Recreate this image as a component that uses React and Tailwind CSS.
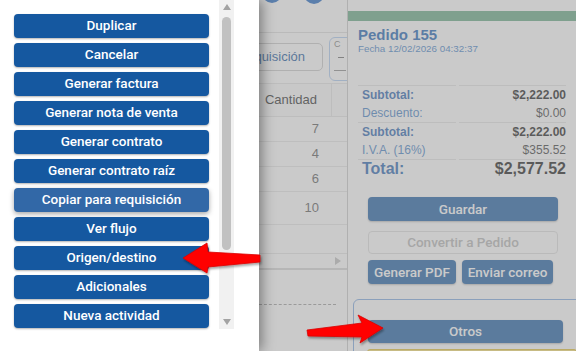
import React from 'react';

const MENU = [
  'Duplicar',
  'Cancelar',
  'Generar factura',
  'Generar nota de venta',
  'Generar contrato',
  'Generar contrato raíz',
  'Copiar para requisición',
  'Ver flujo',
  'Origen/destino',
  'Adicionales',
  'Nueva actividad',
];

const ROWS = [
  { qty: 7, h: 'h-[25px]' },
  { qty: 4, h: 'h-[25px]' },
  { qty: 6, h: 'h-[25px]' },
  { qty: 10, h: 'h-[33px]' },
];

const Drawer = () => {
  return (
    <div className="relative z-10 w-[259px] h-full shrink-0 bg-white flex shadow-[3px_0_12px_rgba(0,0,0,0.4)] font-['Roboto',sans-serif]">
      <div className="w-[219px] pl-[14px] pt-[14px] flex flex-col gap-[5px]">
        {MENU.map((label) => {
          const hover = label === 'Copiar para requisición';
          return (
            <button
              key={label}
              className={`w-[195px] h-[24px] shrink-0 rounded-[4px] flex items-center justify-center text-white text-[13.5px] font-medium leading-none ${
                hover
                  ? 'bg-[#3268a7] shadow-[0_2px_5px_rgba(0,0,0,0.35)]'
                  : 'bg-[#1558a0] shadow-[0_1px_2px_rgba(0,0,0,0.3)]'
              }`}
            >
              {label}
            </button>
          );
        })}
      </div>

      <div className="w-[15px] h-[329px] bg-[#f1f1f1] flex flex-col items-center">
        <div className="mt-[4px] w-0 h-0 border-x-[4px] border-x-transparent border-b-[6px] border-b-[#a3a3a3]" />
        <div className="mt-[7px] w-[9px] h-[233px] rounded-full bg-[#c1c1c1]" />
        <div className="mt-auto mb-[4px] w-0 h-0 border-x-[4px] border-x-transparent border-t-[6px] border-t-[#a3a3a3]" />
      </div>
    </div>
  );
};

const LeftColumn = () => {
  return (
    <div className="w-[88px] shrink-0 h-full overflow-hidden bg-white">
      <div className="h-[33px] border-b border-[#dddddd] flex">
        <div className="ml-[3px] -mt-[17px] w-[20px] h-[20px] rounded-full bg-[#1560c0]" />
        <div className="ml-[22px] -mt-[16px] w-[20px] h-[20px] rounded-full bg-[#1560c0]" />
      </div>

      <div className="h-[50px] flex items-start">
        <div className="-ml-[90px] mt-[10px] w-[154px] h-[28px] shrink-0 border border-[#c8c8c8] rounded-[5px] flex items-center justify-end pr-[17px] text-[13px] text-[#0d4f99] whitespace-nowrap">
          Copiar para requisición
        </div>
        <div className="ml-[6px] mt-[4px] w-[40px] h-[44px] shrink-0 border border-[#a9c8f0] rounded-[6px] px-[4px] pt-[1px] flex flex-col text-[9px] leading-[11px] text-[#777]">
          <span>C</span>
          <span className="mt-[7px] ml-[4px] w-[6px] border-t border-[#666]" />
          <span className="mt-[12px] w-[12px] border-t border-[#888]" />
        </div>
      </div>

      <div className="h-[34px] flex border-y border-[#e3e3e3] bg-[#fafafa]">
        <div className="w-[73px] border-r border-[#e3e3e3] flex items-center justify-end pr-[14px] text-[13px] text-[#222]">
          Cantidad
        </div>
      </div>

      {ROWS.map((r) => (
        <div key={r.qty} className={`${r.h} border-b border-[#e6e6e6] flex`}>
          <div className="w-[73px] flex items-center justify-end pr-[13px] text-[13px] text-[#555]">{r.qty}</div>
        </div>
      ))}

      <div className="h-[28px]" />
      <div className="h-[17px] border-t border-[#e3e3e3] border-b-2 border-b-[#d4d4d4] flex items-center justify-end pr-[6px]">
        <div className="w-0 h-0 border-y-[4px] border-y-transparent border-l-[6px] border-l-[#bdbdbd]" />
      </div>
      <div className="mt-[34px] w-[77px] border-t border-dashed border-[#9a9a9a]" />
    </div>
  );
};

const SummaryRow = ({ label, value, bold, big, top, h }) => (
  <>
    <div
      className={`${h} pl-[4px] flex items-center ${top ? 'border-t border-[#e3e3e3]' : ''} ${
        big ? 'text-[16px] font-bold text-[#1f5fae]' : bold ? 'text-[12px] font-bold text-[#1f5fae]' : 'text-[12px] text-[#3d7cc4]'
      }`}
    >
      {label}
    </div>
    <div
      className={`${h} flex items-center justify-end ${top ? 'border-t border-[#e3e3e3]' : ''} ${
        big ? 'text-[16px] font-bold text-[#111]' : bold ? 'text-[12px] font-bold text-[#111]' : 'text-[12px] text-[#333]'
      }`}
    >
      {value}
    </div>
  </>
);

const RightColumn = () => {
  return (
    <div className="flex-1 h-full overflow-hidden border-l border-[#c8c8c8] bg-white pt-[11px]">
      <div className="h-[10px] bg-[#61a781]" />
      <div className="pl-[10px] mt-[5px] text-[15px] leading-[17px] font-bold text-[#135db1]">Pedido 155</div>
      <div className="pl-[10px] text-[9.8px] leading-[11px] text-[#3a7cc6]">Fecha 12/02/2026 04:32:37</div>

      <div className="mt-[31px] ml-[10px] grid grid-cols-[98px_107px] gap-x-[3px]">
        <SummaryRow label="Subtotal:" value="$2,222.00" bold top h="h-[18px]" />
        <SummaryRow label="Descuento:" value="$0.00" h="h-[19px]" />
        <SummaryRow label="Subtotal:" value="$2,222.00" bold top h="h-[18px]" />
        <SummaryRow label="I.V.A. (16%)" value="$355.52" h="h-[19px]" />
        <SummaryRow label="Total:" value="$2,577.52" big top h="h-[19px]" />
      </div>

      <div className="ml-[20px] mt-[19px] font-['Roboto',sans-serif]">
        <button className="block w-[190px] h-[24px] rounded-[4px] bg-[#1558a0] text-white text-[13.5px] font-medium shadow-[0_1px_2px_rgba(0,0,0,0.3)]">
          Guardar
        </button>
        <button className="block mt-[10px] w-[190px] h-[23px] rounded-[4px] border border-[#dddddd] text-[#b2b2b2] text-[13.5px] font-medium">
          Convertir a Pedido
        </button>
        <div className="mt-[6px] flex gap-[6px]">
          <button className="w-[88px] h-[24px] rounded-[4px] bg-[#1558a0] text-white text-[13.5px] font-medium shadow-[0_1px_2px_rgba(0,0,0,0.3)]">
            Generar PDF
          </button>
          <button className="w-[91px] h-[24px] rounded-[4px] bg-[#1558a0] text-white text-[13.5px] font-medium shadow-[0_1px_2px_rgba(0,0,0,0.3)]">
            Enviar correo
          </button>
        </div>
      </div>

      <div className="ml-[5px] mt-[15px] w-[240px] h-[80px] border border-[#7aa6e0] rounded-[6px] pt-[20px] pl-[14px] font-['Roboto',sans-serif]">
        <button className="block w-[195px] h-[23px] rounded-[4px] bg-[#1558a0] text-white text-[13.5px] font-medium shadow-[0_1px_2px_rgba(0,0,0,0.3)]">
          Otros
        </button>
        <div className="mt-[6px] -ml-[1px] w-[210px] h-[20px] border border-[#e2bd2c] bg-[#f8df6a] rounded-[3px]" />
      </div>
    </div>
  );
};

const Arrows = () => (
  <svg className="absolute inset-0 z-20 pointer-events-none" width="576" height="351" viewBox="0 0 576 351">
    <defs>
      <filter id="sh" x="-20%" y="-40%" width="140%" height="180%">
        <feDropShadow dx="1" dy="2" stdDeviation="1.2" floodColor="#000" floodOpacity="0.35" />
      </filter>
    </defs>
    <polygon
      points="183,258 207,243 208,252 260,255 260,262 208,267 207,273"
      fill="#ff0000"
      stroke="#d80000"
      strokeWidth="0.8"
      strokeLinejoin="round"
      filter="url(#sh)"
    />
    <polygon
      points="383,328 358,315 362,323 307,330 308,336 362,337 360,343"
      fill="#ff0000"
      stroke="#d80000"
      strokeWidth="0.8"
      strokeLinejoin="round"
      filter="url(#sh)"
    />
  </svg>
);

export default function App() {
  return (
    <div className="relative w-[576px] h-[351px] overflow-hidden flex bg-white font-['Liberation_Sans',Arial,sans-serif]">
      <Drawer />
      <div className="relative flex-1 h-full flex overflow-hidden">
        <LeftColumn />
        <RightColumn />
        <div className="absolute inset-0 bg-[rgba(154,154,154,0.53)]" />
      </div>
      <Arrows />
    </div>
  );
}
